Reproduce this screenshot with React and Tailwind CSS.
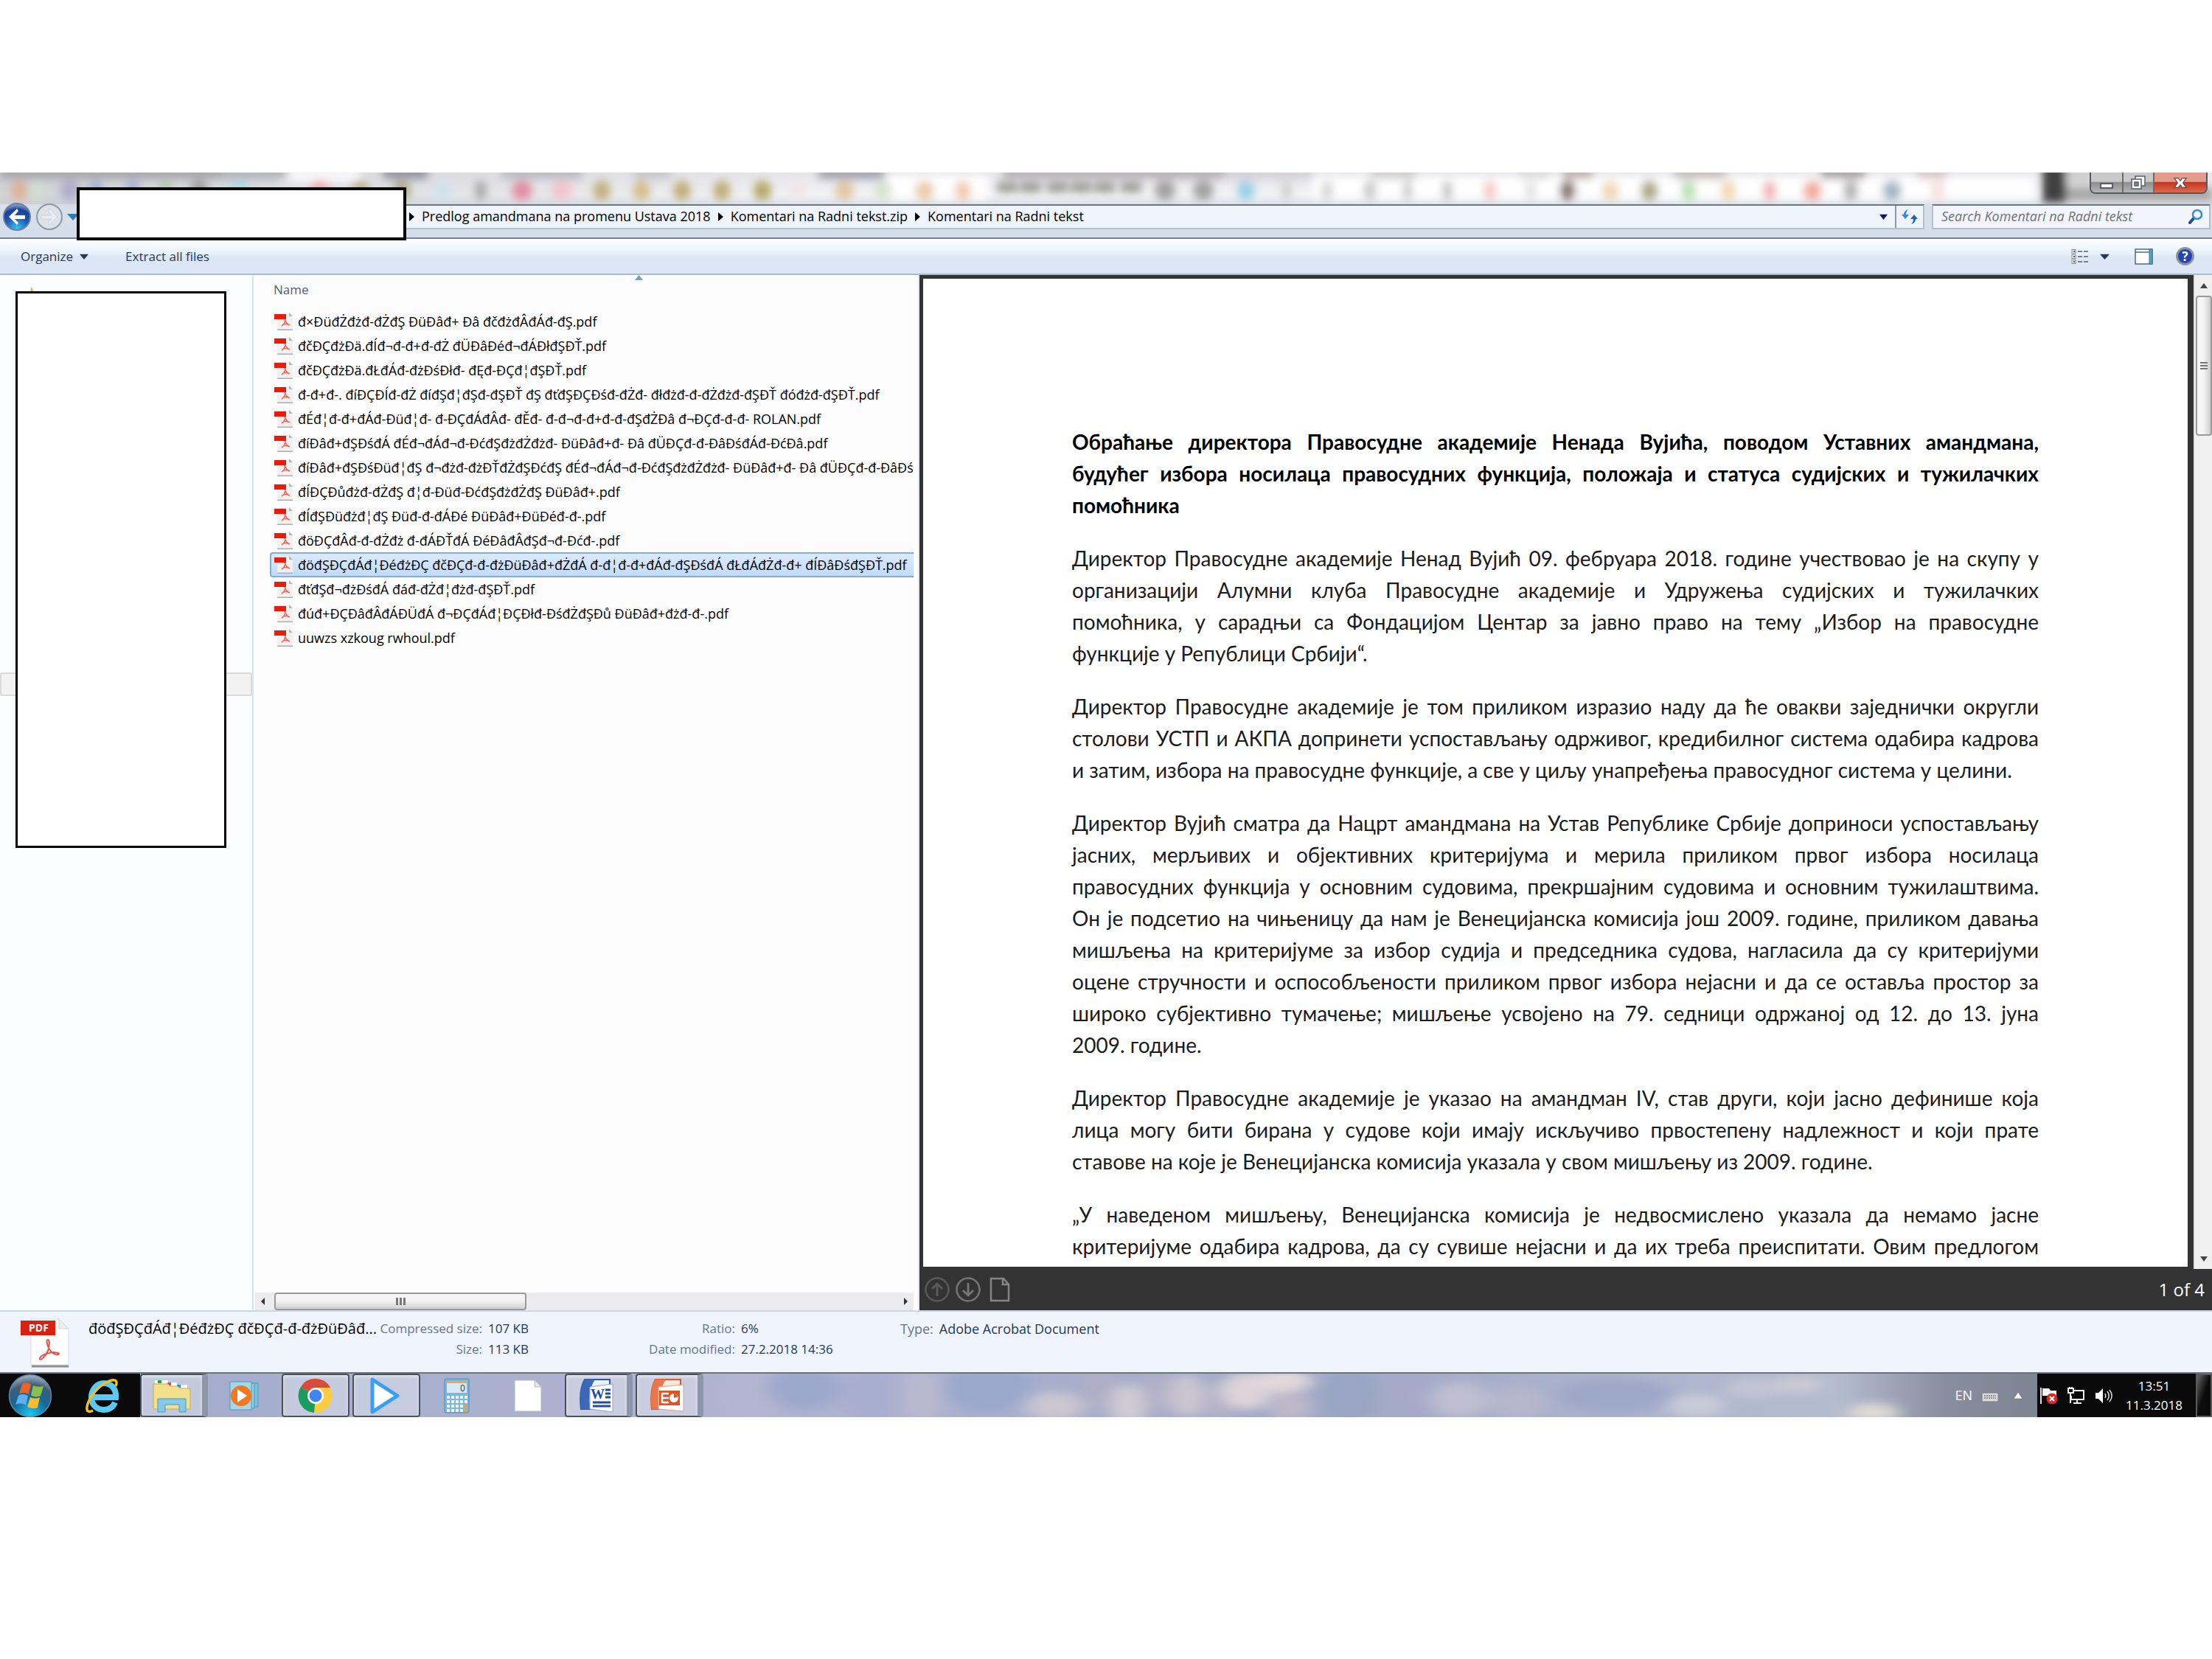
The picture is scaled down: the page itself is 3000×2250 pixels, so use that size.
import React, { useState } from 'react';

const files = [
  'đ×ĐüđŻđżđ-đŻđŞ ĐüĐâđ+ Đâ đčđżđÂđÁđ-đŞ.pdf',
  'đčĐÇđżĐä.đÍđ¬đ-đ+đ-đŻ đÜĐâĐéđ¬đÁĐłđŞĐŤ.pdf',
  'đčĐÇđżĐä.đŁđÁđ-đżĐśĐłđ- đĘđ-ĐÇđ¦đŞĐŤ.pdf',
  'đ-đ+đ-. đíĐÇĐÍđ-đŻ đíđŞđ¦đŞđ-đŞĐŤ đŞ đťđŞĐÇĐśđ-đŻđ- đłđżđ-đ-đŻđżđ-đŞĐŤ đóđżđ-đŞĐŤ.pdf',
  'đÉđ¦đ-đ+đÁđ-Đüđ¦đ- đ-ĐÇđÁđÂđ- đĚđ- đ-đ¬đ-đ+đ-đ-đŞđŻĐâ đ¬ĐÇđ-đ-đ- ROLAN.pdf',
  'đíĐâđ+đŞĐśđÁ đÉđ¬đÁđ¬đ-ĐćđŞđżđŻđżđ- ĐüĐâđ+đ- Đâ đÜĐÇđ-đ-ĐâĐśđÁđ-ĐćĐâ.pdf',
  'đíĐâđ+đŞĐśĐüđ¦đŞ đ¬đżđ-đżĐŤđŻđŞĐćđŞ đÉđ¬đÁđ¬đ-ĐćđŞđżđŻđżđ- ĐüĐâđ+đ- Đâ đÜĐÇđ-đ-ĐâĐś',
  'đÍĐÇĐůđżđ-đŻđŞ đ¦đ-Đüđ-ĐćđŞđżđŻđŞ ĐüĐâđ+.pdf',
  'đÍđŞĐüđżđ¦đŞ Đüđ-đ-đÁĐé ĐüĐâđ+ĐüĐéđ-đ-.pdf',
  'đöĐÇđÂđ-đ-đŻđż đ-đÁĐŤđÁ ĐéĐâđÂđŞđ¬đ-Đćđ-.pdf',
  'đöđŞĐÇđÁđ¦ĐéđżĐÇ đčĐÇđ-đ-đżĐüĐâđ+đŻđÁ đ-đ¦đ-đ+đÁđ-đŞĐśđÁ đŁđÁđŻđ-đ+ đÍĐâĐśđŞĐŤ.pdf',
  'đťđŞđ¬đżĐśđÁ đáđ-đŻđ¦đżđ-đŞĐŤ.pdf',
  'đúđ+ĐÇĐâđÂđÁĐÜđÁ đ¬ĐÇđÁđ¦ĐÇĐłđ-ĐśđŻđŞĐů ĐüĐâđ+đżđ-đ-.pdf',
  'uuwzs xzkoug rwhoul.pdf',
];

const heading = [
  'Обраћање директора Правосудне академије Ненада Вујића, поводом Уставних амандмана,',
  'будућег избора носилаца правосудних функција, положаја и статуса судијских и тужилачких',
  'помоћника',
];

const paragraphs = [
  [
    'Директор Правосудне академије Ненад Вујић 09. фебруара 2018. године учествовао је на скупу у',
    'организацији Алумни клуба Правосудне академије и Удружења судијских и тужилачких',
    'помоћника, у сарадњи са Фондацијом Центар за јавно право на тему „Избор на правосудне',
    'функције у Републици Србији“.',
  ],
  [
    'Директор Правосудне академије је том приликом изразио наду да ће овакви заједнички округли',
    'столови УСТП и АКПА допринети успостављању одрживог, кредибилног система одабира кадрова',
    'и затим, избора на правосудне функције, а све у циљу унапређења правосудног система у целини.',
  ],
  [
    'Директор Вујић сматра да Нацрт амандмана на Устав Републике Србије доприноси успостављању',
    'јасних, мерљивих и објективних критеријума и мерила приликом првог избора носилаца',
    'правосудних функција у основним судовима, прекршајним судовима и основним тужилаштвима.',
    'Он је подсетио на чињеницу да нам је Венецијанска комисија још 2009. године, приликом давања',
    'мишљења на критеријуме за избор судија и председника судова, нагласила да су критеријуми',
    'оцене стручности и оспособљености приликом првог избора нејасни и да се оставља простор за',
    'широко субјективно тумачење; мишљење усвојено на 79. седници одржаној од 12. до 13. јуна',
    '2009. године.',
  ],
  [
    'Директор Правосудне академије је указао на амандман IV, став други, који јасно дефинише која',
    'лица могу бити бирана у судове који имају искључиво првостепену надлежност и који прате',
    'ставове на које је Венецијанска комисија указала у свом мишљењу из 2009. године.',
  ],
];

// runs on to the next page, so its last visible line is justified too
const openParagraph = [
  '„У наведеном мишљењу, Венецијанска комисија је недвосмислено указала да немамо јасне',
  'критеријуме одабира кадрова, да су сувише нејасни и да их треба преиспитати. Овим предлогом',
];

// x, colour, half width of the icons showing through the glass frame
const glassSpots = [
  [26, '#e0aa8c', 12], [50, '#cfe0d0', 10], [95, '#a9a2c8', 14], [130, '#8fa6d0', 10], [180, '#93a3d6', 10],
  [225, '#a8c8a0', 10], [270, '#8c8c8c', 12], [325, '#9fdcea', 14], [434, '#f29a9a', 14], [488, '#b5a060', 12],
  [545, '#a89a70', 12], [600, '#c9e4f0', 12], [652, '#9a9a9a', 8], [708, '#df7b93', 14], [762, '#f5bcc6', 14],
  [816, '#b9a468', 12], [870, '#d0b474', 12], [925, '#b5a060', 12], [979, '#b5a060', 12], [1034, '#a89848', 12],
  [1082, '#f4e4e6', 12], [1145, '#dcbd92', 13], [1198, '#d0dfc8', 12], [1254, '#e6c096', 13], [1306, '#f0bd9c', 11],
  [1580, '#8e8e8e', 14], [1632, '#8e8e8e', 14], [1690, '#86c8e2', 12], [1745, '#c8c8c8', 7], [1800, '#cacaca', 8],
  [1858, '#bdbdbd', 9], [1909, '#c2c2c2', 7], [1963, '#b4b4b4', 7], [2021, '#f4bcbc', 9], [2076, '#dadada', 7],
  [2126, '#705458', 11], [2184, '#eccfa2', 12], [2237, '#9c9468', 12], [2290, '#a8d8a0', 10], [2344, '#f0cf9f', 11],
  [2400, '#ee9c9c', 9], [2458, '#f09a86', 13], [2510, '#a0a0a0', 10], [2566, '#8ea2b8', 13], [2628, '#f6d8d8', 10],
];

const smudges = [
  [0, 300, '#a8a8ac'], [300, 90, '#b4b4bc'], [520, 60, '#9494a0'], [680, 110, '#bcbcc6'], [860, 50, '#c8c8cc'],
  [1110, 90, '#a4a4b0'], [1360, 300, '#b8b2ba'], [1660, 120, '#d4d2d8'], [1860, 60, '#d0cccc'], [2060, 40, '#dcdcdc'],
  [2120, 40, '#c0b0b0'], [2270, 70, '#c8bcbc'], [2470, 60, '#a8a0a4'], [2600, 40, '#d8c8c8'],
];

const GlassBackdrop = () => (
  <svg className="absolute inset-0 w-full h-full" viewBox="0 0 3000 90" preserveAspectRatio="none" aria-hidden="true">
    <defs>
      <linearGradient id="glass" x1="0" x2="0" y1="0" y2="1">
        <stop offset="0" stopColor="#e6e5ea" />
        <stop offset=".34" stopColor="#f2f2f5" />
        <stop offset=".5" stopColor="#d8dfe8" />
        <stop offset="1" stopColor="#d3deec" />
      </linearGradient>
      <linearGradient id="glassLeft">
        <stop offset="0" stopColor="#c4c6ca" />
        <stop offset="1" stopColor="#c4c6ca" stopOpacity="0" />
      </linearGradient>
      <filter id="soft" x="-5%" y="-50%" width="110%" height="200%"><feGaussianBlur stdDeviation="6" /></filter>
    </defs>
    <rect width="3000" height="90" fill="url(#glass)" />
    <rect width="1100" height="44" fill="url(#glassLeft)" opacity=".7" />
    <g filter="url(#soft)">
      <rect x="1780" y="6" width="980" height="30" fill="#fff" />
      <rect x="1200" y="4" width="140" height="32" fill="#fff" />
      <rect x="380" y="-6" width="110" height="20" fill="#f8f8fa" />
      {smudges.map(([x, w, c]) => <rect key={x} x={x} y="-10" width={w} height="19" fill={c} />)}
      {glassSpots.map(([x, c, r]) => <ellipse key={x} cx={x} cy="25" rx={r} ry="14" fill={c} opacity=".8" />)}
      {[1352, 1384, 1420, 1452, 1484, 1520].map((x) => <rect key={x} x={x} y="14" width="28" height="13" fill="#96968e" />)}
      <rect x="2770" y="-10" width="32" height="52" fill="#3f3f3f" />
      <rect x="2802" y="20" width="200" height="20" fill="#a6a6a6" />
      <rect x="2802" y="-10" width="38" height="26" fill="#cfcfcf" />
    </g>
  </svg>
);

const Triangle = ({ className }) => (
  <svg className={className} viewBox="0 0 10 10" preserveAspectRatio="none" aria-hidden="true"><path d="M0 1h10L5 10z" fill="currentColor" /></svg>
);

const CrumbArrow = () => (
  <svg className="w-[7px] h-[12px]" viewBox="0 0 7 12" aria-hidden="true"><path d="M0 0l7 6-7 6z" fill="#000" /></svg>
);

const BackIcon = () => (
  <svg className="w-10 h-10" viewBox="0 0 40 40" aria-hidden="true">
    <defs>
      <radialGradient id="back" cx=".5" cy=".95" r=".9">
        <stop offset="0" stopColor="#3cc4f6" />
        <stop offset=".5" stopColor="#1a5cb4" />
        <stop offset=".8" stopColor="#1c3f94" />
        <stop offset="1" stopColor="#7c9cd4" />
      </radialGradient>
    </defs>
    <circle cx="20" cy="20" r="18" fill="url(#back)" stroke="#6f7f98" strokeWidth="2" />
    <path d="M9 20L20 9l2 3-5 6h14v5H17l5 5-2 3z" fill="#fff" />
  </svg>
);

const ForwardIcon = () => (
  <svg className="w-10 h-10" viewBox="0 0 40 40" aria-hidden="true">
    <circle cx="20" cy="20" r="17" fill="#dde1e8" stroke="#9097a0" strokeWidth="2" />
    <path d="M31 20L20 9l-2 3 5 6H9v5h14l-5 5 2 3z" fill="#e9ecf1" stroke="#cdd3dc" />
  </svg>
);

const PdfSmall = () => (
  <svg className="w-[26px] h-6 shrink-0" viewBox="0 0 26 24" aria-hidden="true">
    <path d="M4 1h16l5 5v17H4z" fill="#f1f1f1" />
    <path d="M20 0l5 5h-5z" fill="#b4b4b4" />
    <path d="M4 23.300h21" stroke="#adadad" strokeWidth="1.500" />
    <path d="M0 2h16v7H0z" fill="#e61c0c" />
    <path d="M14 9c2 5 4 7 7 8M15 9c0 4-2 7-5 9M12 16c3-1 6-1 9 1" fill="none" stroke="#ef6a60" strokeWidth="1.600" />
  </svg>
);

const PdfLarge = () => (
  <svg className="w-[66px] h-[68px]" viewBox="0 0 66 68" aria-hidden="true">
    <path d="M14 1h38l13 13v49H14z" fill="#fdfdfd" stroke="#dcdcdc" />
    <path d="M52 1v13h13z" fill="#ececec" stroke="#d6d6d6" />
    <path d="M15 65h50" stroke="#8e8e8e" strokeWidth="3" />
    <path d="M0 3h47v20H0z" fill="#dc2010" />
    <text x="11" y="18" fontSize="14" fontWeight="700" fill="#fff" fontFamily="Open Sans, sans-serif">PDF</text>
    <path d="M37 29c-3 0-1 8 2 13 3 5 8 8 12 7 4-2-6-4-12-2-6 1-13 4-13 8 1 3 7-3 10-9s4-17 1-17z" fill="none" stroke="#e0544c" strokeWidth="2" />
  </svg>
);

const TitleButtons = () => (
  <div className="flex h-[29px] w-[160px] rounded-b-lg border-2 border-t-0 border-[#55585e] overflow-hidden">
    <button aria-label="Minimize" className="w-[44px] flex items-center justify-center pt-2 bg-linear-to-b from-[#c9c9c9] from-45% via-[#8e8e8e] via-50% to-[#b5b5b5] border-r-2 border-[#6c6c6c]">
      <span className="w-[18px] h-[8px] bg-white border-2 border-[#5c5c66]" />
    </button>
    <button aria-label="Restore" className="w-[42px] flex items-center justify-center bg-linear-to-b from-[#c9c9c9] from-45% via-[#8e8e8e] via-50% to-[#b5b5b5] border-r-2 border-[#6c6c6c]">
      <svg className="w-5 h-5" viewBox="0 0 20 20" fill="#fff" stroke="#5c5c66" strokeWidth="1.500">
        <path d="M6 1h13v13H6z" /><path d="M1 5h13v13H1z" /><path d="M5 9h5v5H5z" fill="#888" />
      </svg>
    </button>
    <button aria-label="Close" className="flex-1 flex items-center justify-center bg-linear-to-b from-[#e39b8c] from-45% via-[#c8321c] via-50% to-[#dc6a50]">
      <svg className="w-[18px] h-4" viewBox="0 0 20 16"><path d="M1 1h6l3 4 3-4h6l-5 7 5 7h-6l-3-4-3 4H1l5-7z" fill="#fff" stroke="#6a4248" strokeWidth="1.300" /></svg>
    </button>
  </div>
);

const TitleBar = () => (
  <header className="relative h-[90px] shrink-0 border-b-2 border-[#76808e] flex flex-col">
    <GlassBackdrop />
    <div className="relative flex justify-end pr-[6px]"><TitleButtons /></div>
    <div className="relative flex items-center h-[62px] pt-[2px] pl-[3px] pr-[2px]">
      <button aria-label="Back"><BackIcon /></button>
      <button aria-label="Forward" className="ml-1"><ForwardIcon /></button>
      <button aria-label="Recent pages" className="ml-1 text-[#2c7fb4]"><Triangle className="w-4 h-[10px]" /></button>
      <nav className="ml-2 flex-1 flex items-center h-[34px] bg-[#eff4fb] border-2 border-t-[#6d7680] border-[#b4bfca] pl-[438px] text-[18px] text-black">
        <CrumbArrow />
        <a href="#predlog" className="ml-[10px] mr-[10px]">Predlog amandmana na promenu Ustava 2018</a>
        <CrumbArrow />
        <a href="#zip" className="ml-[10px] mr-[10px]">Komentari na Radni tekst.zip</a>
        <CrumbArrow />
        <a href="#tekst" className="ml-[10px]">Komentari na Radni tekst</a>
        <button aria-label="Previous locations" className="ml-auto mr-[10px] text-[#14145c]"><Triangle className="w-[11px] h-2" /></button>
        <button aria-label="Refresh" className="w-[38px] h-full border-l-2 border-[#8f98a4] flex items-center justify-center">
          <svg className="w-[22px] h-5" viewBox="0 0 22 20"><path d="M9 0C5 1 3 4 3 7H0l5 6 5-6H6c0-3 1-5 3-7z" fill="#3a8ad4" /><path d="M13 20c4-1 6-4 6-7h3l-5-6-5 6h4c0 3-1 5-3 7z" fill="#2a5fa4" /></svg>
        </button>
      </nav>
      <label className="ml-[10px] w-[378px] h-[34px] flex items-center bg-[#f2f6fc] border-2 border-t-[#6d7680] border-[#b4bfca] pl-[11px] pr-2">
        <input type="text" aria-label="Search" placeholder="Search Komentari na Radni tekst" className="flex-1 min-w-0 bg-transparent text-[18px] italic placeholder:text-[#6e7278] outline-none" />
        <svg className="w-5 h-5" viewBox="0 0 20 20" fill="none"><path d="M2 18l6-7" stroke="#1f4f94" strokeWidth="4" strokeLinecap="round" /><circle cx="12" cy="7" r="6" stroke="#3a8ad0" strokeWidth="2.500" fill="#eef6fd" /></svg>
      </label>
    </div>
  </header>
);

const Toolbar = () => (
  <div className="h-[49px] shrink-0 flex items-center pl-7 pr-6 text-[17px] text-[#1e395b] bg-linear-to-b from-[#fafdff] from-5% via-[#e6f0fb] via-45% to-[#dce7f5] to-50% border-b-2 border-[#a9bbd0]">
    <button className="flex items-center gap-[9px]">Organize <Triangle className="w-[12px] h-2" /></button>
    <button className="ml-[50px]">Extract all files</button>
    <button aria-label="Change view" className="ml-auto flex items-center gap-[15px]">
      <svg className="w-6 h-5" viewBox="0 0 24 20">
        {[0, 7, 14].map((y) => (
          <g key={y}>
            <rect x="1" y={y + 0.5} width="5" height="5" fill="#fff" stroke="#7c8896" />
            <rect x="3" y={y + 2} width="2" height="2" fill="#7a4c5c" />
            <path d={`M9 ${y + 3}h6M17 ${y + 3}h6`} stroke="#566272" strokeWidth="1.500" />
          </g>
        ))}
      </svg>
      <Triangle className="w-[13px] h-2" />
    </button>
    <button aria-label="Preview pane" className="ml-[34px]">
      <svg className="w-[25px] h-[22px]" viewBox="0 0 25 22"><path d="M1 1h23v20H1z" fill="#fff" stroke="#4c6a88" strokeWidth="1.500" /><path d="M1 5h19" stroke="#4c6a88" strokeWidth="1.500" /><path d="M20 1h4v20h-4z" fill="#58a4bc" stroke="#3b7890" /></svg>
    </button>
    <button aria-label="Help" className="ml-[31px]">
      <svg className="w-[25px] h-[25px]" viewBox="0 0 25 25"><circle cx="12.500" cy="12.500" r="11" fill="#2444b4" stroke="#8e929c" strokeWidth="3" /><text x="12.500" y="18.500" fontSize="17" fontWeight="700" textAnchor="middle" fill="#fff" fontFamily="Open Sans, sans-serif">?</text></svg>
    </button>
  </div>
);

const Sidebar = () => (
  <aside className="relative w-[344px] shrink-0 bg-[#fcfdfe] border-r-2 border-[#d8e4f0]">
    <svg className="absolute left-[39px] top-4 w-2 h-3" viewBox="0 0 8 12"><path d="M4 0l4 12H0z" fill="#f5a540" /></svg>
    <div className="absolute left-0 right-0 top-[539px] h-8 rounded-sm bg-[#f2f2f2] border-2 border-[#dadada]" />
    <div className="absolute left-[21px] top-[22px] w-[286px] h-[755px] bg-white border-[3px] border-black" />
  </aside>
);

const FileList = () => {
  const [selected, setSelected] = useState(10);

  return (
    <section className="w-[903px] shrink-0 flex flex-col bg-[#fcfcfd] border-r-2 border-[#dfe7ef] pl-[2px] pr-[6px]">
      <div className="relative h-[46px] pl-[25px] pt-2 text-[17px] leading-6 text-[#4c607a]">
        Name
        <svg className="absolute left-[515px] top-0 w-[11px] h-[7px]" viewBox="0 0 11 7"><path d="M5.500 0L11 7H0z" fill="#6fa5bd" /></svg>
      </div>
      <ul className="flex-1 min-h-0 overflow-hidden pl-[20px]">
        {files.map((name, i) => (
          <li key={name} className="h-[33px]">
            <button
              onClick={() => setSelected(i)}
              className={`w-full h-[34px] flex items-center gap-[6px] pl-1 overflow-hidden whitespace-nowrap text-[18px] text-black border-2 border-r-0 rounded-l-sm ${i === selected ? 'bg-linear-to-b from-[#dceafc] to-[#c1dbfc] border-[#84acdd]' : 'border-transparent'}`}
            >
              <PdfSmall />
              <span>{name}</span>
            </button>
          </li>
        ))}
      </ul>
      <div className="h-6 flex items-center bg-[#ececee]">
        <svg className="w-[26px] h-[10px]" viewBox="0 0 26 10"><path d="M13 0v10L8 5z" fill="#333" /></svg>
        <div className="w-[342px] h-6 flex items-center justify-center gap-[2px] rounded-sm border-2 border-[#9a9a9a] bg-linear-to-b from-[#f4f4f4] from-45% to-[#cfcfcf]">
          <span className="w-[3px] h-[10px] bg-[#777]" />
          <span className="w-[3px] h-[10px] bg-[#777]" />
          <span className="w-[3px] h-[10px] bg-[#777]" />
        </div>
        <svg className="ml-auto w-[20px] h-[10px]" viewBox="0 0 20 10"><path d="M7 0l5 5-5 5z" fill="#333" /></svg>
      </div>
    </section>
  );
};

const Lines = ({ lines, open }) => lines.map((line, i) => (
  <span key={line} className={open || i < lines.length - 1 ? 'block whitespace-nowrap [text-align-last:justify]' : 'block whitespace-nowrap'}>{line}</span>
));

const Preview = () => (
  <section className="flex-1 min-w-0 flex flex-col bg-[#333333]">
    <div className="flex-1 min-h-0 flex">
      <div className="flex-1 min-w-0 pt-[5px] pl-[5px] pr-2 pb-[3px]">
        <article className="h-full overflow-hidden bg-white px-[202px] pt-[200px] font-[Lato,'Open_Sans',sans-serif] text-[28px] leading-[43px] text-[#1c1c1c]">
          <h1 className="font-bold text-black mb-[29px]"><Lines lines={heading} /></h1>
          {paragraphs.map((lines) => (
            <p key={lines[0]} className="mb-[29px]"><Lines lines={lines} /></p>
          ))}
          <p><Lines lines={openParagraph} open /></p>
        </article>
      </div>
      <div className="w-[25px] flex flex-col items-center bg-[#f0f0f0] border-l-2 border-[#e2e2e2]">
        <svg className="h-7 w-3" viewBox="0 0 12 28"><path d="M6 11l5 7H1z" fill="#444" /></svg>
        <div className="w-[22px] h-[190px] flex flex-col items-center justify-center gap-[2px] rounded-sm border-2 border-[#9a9a9a] bg-linear-to-r from-[#f6f6f6] from-45% to-[#cfcfcf]">
          <span className="w-[10px] h-[2px] bg-[#777]" />
          <span className="w-[10px] h-[2px] bg-[#777]" />
          <span className="w-[10px] h-[2px] bg-[#777]" />
        </div>
        <svg className="mt-auto h-7 w-3" viewBox="0 0 12 28"><path d="M1 11h10l-5 7z" fill="#444" /></svg>
      </div>
    </div>
    <div className="h-14 shrink-0 flex items-center gap-2 pl-[7px] pr-[10px] text-white">
      <button aria-label="Previous page">
        <svg className="w-[34px] h-[34px]" viewBox="0 0 34 34" fill="none" stroke="#595959" strokeWidth="2.500"><circle cx="17" cy="17" r="15.500" /><path d="M17 26V9M10 16l7-7 7 7" strokeWidth="3" /></svg>
      </button>
      <button aria-label="Next page">
        <svg className="w-[34px] h-[34px]" viewBox="0 0 34 34" fill="none" stroke="#757575" strokeWidth="2.500"><circle cx="17" cy="17" r="15.500" /><path d="M17 8v17M10 18l7 7 7-7" strokeWidth="3" /></svg>
      </button>
      <button aria-label="Single page" className="ml-1">
        <svg className="w-[28px] h-[34px]" viewBox="0 0 28 34" fill="none" stroke="#858585" strokeWidth="2.500"><path d="M2 2h17l7 8v22H2z" /><path d="M18 2v8h8" /></svg>
      </button>
      <span className="ml-auto text-[24px]">1 of 4</span>
    </div>
  </section>
);

const Details = () => (
  <footer className="h-[84px] shrink-0 flex items-start pl-7 pt-[9px] bg-[#f0f4fc] border-t-2 border-[#c9d6e6] text-[17px] leading-7 text-[#1e395b]">
    <PdfLarge />
    <p className="ml-[26px] w-[390px] text-[20px] text-black whitespace-nowrap">đöđŞĐÇđÁđ¦ĐéđżĐÇ đčĐÇđ-đ-đżĐüĐâđ...</p>
    <dl className="grid grid-cols-[144px_auto] gap-x-2 whitespace-nowrap">
      <dt className="text-right text-[#64748a]">Compressed size:</dt><dd>107 KB</dd>
      <dt className="text-right text-[#64748a]">Size:</dt><dd>113 KB</dd>
    </dl>
    <dl className="w-[410px] grid grid-cols-[280px_auto] gap-x-2 whitespace-nowrap">
      <dt className="text-right text-[#64748a]">Ratio:</dt><dd>6%</dd>
      <dt className="text-right text-[#64748a]">Date modified:</dt><dd>27.2.2018 14:36</dd>
    </dl>
    <dl className="ml-[94px] flex gap-2 text-[18px] whitespace-nowrap">
      <dt className="text-[#64748a]">Type:</dt><dd>Adobe Acrobat Document</dd>
    </dl>
  </footer>
);

const StartIcon = () => (
  <svg className="w-[60px] h-[60px]" viewBox="0 0 60 60">
    <defs>
      <radialGradient id="orb" cx=".5" cy=".95" r=".95">
        <stop offset="0" stopColor="#1cc8f4" />
        <stop offset=".45" stopColor="#14699c" />
        <stop offset=".75" stopColor="#3d5c78" />
        <stop offset="1" stopColor="#a8b8c8" />
      </radialGradient>
    </defs>
    <circle cx="30" cy="30" r="28.500" fill="url(#orb)" stroke="#5c87a4" strokeWidth="1.500" />
    <path d="M19 14c3-2 7-2 12 0l-3 14c-5-3-9-2-13-1z" fill="#e8632c" />
    <path d="M34 16c5 2 9 2 14 1l-4 13c-5 2-9 2-13-1z" fill="#8cc04c" />
    <path d="M14 30c4-3 9-2 13 0l-3 13c-4-3-9-3-14-1z" fill="#5fb0ec" />
    <path d="M30 32c5 2 9 2 13 0l-3 14c-4 2-9 1-14-1z" fill="#f8bc30" />
  </svg>
);

const IeIcon = () => (
  <svg className="w-[50px] h-[50px]" viewBox="0 0 50 50" fill="none">
    <path d="M43 34c-3 7-8 10-15 10-10 0-17-7-17-17S18 8 28 8s17 8 16 19H14" stroke="#5cc8f4" strokeWidth="8" />
    <path d="M13 45c-6 3-9 1-8-5C7 28 20 11 35 5c8-3 12-1 9 7" stroke="#f0c020" strokeWidth="3.500" />
  </svg>
);

const ExplorerIcon = () => (
  <svg className="w-[54px] h-[48px]" viewBox="0 0 54 48">
    <path d="M4 3h18v5H4zM18 6h16v5H18zM30 9h18v5H30z" fill="#fff" />
    <path d="M8 3h5v4H8z" fill="#1ca838" /><path d="M21 6h5v4h-5z" fill="#e04c20" /><path d="M34 9h5v4h-5z" fill="#2c90e0" />
    <path d="M2 8h20l3 3h10l3 3h14v28H2z" fill="#f4df8c" stroke="#c8a850" />
    <path d="M8 46V28h38v18h-9V36H18v10z" fill="#86c8e8" stroke="#4c98c0" />
  </svg>
);

const MediaIcon = () => (
  <svg className="w-[44px] h-[42px]" viewBox="0 0 44 42">
    <path d="M12 4h28v32H12z" fill="#7cc0e0" stroke="#4a98bc" /><path d="M7 4h28v34H7z" fill="#90cce6" stroke="#4a98bc" /><path d="M2 2h29v38H2z" fill="#a4d6ec" stroke="#4a98bc" />
    <circle cx="17" cy="21" r="14" fill="#f07820" /><path d="M12 12l13 9-13 9z" fill="#fff" />
  </svg>
);

const ChromeIcon = () => (
  <svg className="w-[48px] h-[48px]" viewBox="0 0 48 48">
    <path d="M24 24L4 12A23 23 0 0 1 44 13z" fill="#d84a3c" />
    <path d="M24 24L4 12a23 23 0 0 0 18 35l9-18z" fill="#1c9c5c" />
    <path d="M24 24l-2 23a23 23 0 0 0 22-34H24z" fill="#fccc40" />
    <circle cx="24" cy="24" r="11" fill="#fff" /><circle cx="24" cy="24" r="8.500" fill="#4484f0" />
  </svg>
);

const PlayIcon = () => (
  <svg className="w-[48px] h-[52px]" viewBox="0 0 48 52"><path d="M5 4l34 22L5 48z" fill="#fff" stroke="#38a0f0" strokeWidth="5" strokeLinejoin="round" /></svg>
);

const CalcIcon = () => (
  <svg className="w-[36px] h-[48px]" viewBox="0 0 36 48">
    <rect x="1" y="1" width="33" height="46" rx="2" fill="#7cb8dc" stroke="#4a8cb8" />
    <rect x="4" y="4" width="27" height="16" fill="#d8e8f4" /><path d="M4 4h27v3H4z" fill="#f0a848" />
    <text x="22" y="18" fontSize="12" fill="#335" fontFamily="Open Sans, sans-serif">0</text>
    {[25, 31, 37, 43].map((y) => [4, 10, 16, 22, 28].map((x) => <rect key={`${x}-${y}`} x={x} y={y - 1} width="4" height="4" fill={x === 28 && y > 36 ? '#f0a030' : '#eef6fc'} />))}
  </svg>
);

const FileIcon = () => (
  <svg className="w-[38px] h-[44px]" viewBox="0 0 38 44"><path d="M1 1h27l9 9v33H1z" fill="#fff" stroke="#b8b8bc" /><path d="M28 1v9h9" fill="#e4e4e4" stroke="#b8b8bc" /></svg>
);

const WordIcon = () => (
  <svg className="w-[48px] h-[48px]" viewBox="0 0 48 48">
    <path d="M8 2h34v40H3C1 25 2 12 8 2z" fill="#e8f0fb" stroke="#2c58a8" strokeWidth="2" />
    <path d="M8 2h14C14 14 13 28 16 42H3C1 25 2 12 8 2z" fill="#3c68b8" />
    <path d="M15 12l31-4v38l-31-4z" fill="#fff" stroke="#8ca4d0" />
    <text x="16" y="28" fontSize="19" fontWeight="700" fill="#244c9c" fontFamily="Liberation Serif, serif">W</text>
    <path d="M36 16h7M36 21h7M36 26h7M19 33h24M19 38h24" stroke="#244c9c" strokeWidth="3" />
  </svg>
);

const PowerPointIcon = () => (
  <svg className="w-[48px] h-[48px]" viewBox="0 0 48 48">
    <path d="M8 2h34v40H3C1 25 2 12 8 2z" fill="#fbe6dc" stroke="#d4582c" strokeWidth="2" />
    <path d="M8 2h14C14 14 13 28 16 42H3C1 25 2 12 8 2z" fill="#e8784c" />
    <path d="M12 12l34-3v36l-34-3z" fill="#fff" stroke="#e0a080" />
    <path d="M13 17h28v20H13z" fill="#dc5424" />
    <path d="M17 21h9M17 27h9M17 33h9M17 20v14" stroke="#fff" strokeWidth="2.500" />
    <circle cx="33" cy="27" r="6" fill="#fff" /><path d="M33 27v-7l6 5z" fill="#dc5424" />
  </svg>
);

const TaskButton = ({ label, framed, stacked, children }) => (
  <button
    aria-label={label}
    className={`w-[92px] h-full flex items-center justify-center ${framed ? 'rounded-sm border-2 border-[#4a505c] bg-white/35 inset-shadow-sm inset-shadow-white/60' : ''} ${stacked ? 'border-r-[8px] border-r-[#8e96aa]' : ''}`}
  >
    {children}
  </button>
);

// x, y, rx, ry, colour of each cloud bank
const clouds = [
  [1020, 30, 40, 40, '#b4b6d0'], [1090, 20, 50, 30, '#9ca8cc'], [1180, 30, 40, 40, '#a8aed0'], [1250, 30, 30, 40, '#b8b8d0'],
  [1340, 20, 60, 34, '#9aa8cc'], [1430, 45, 40, 20, '#cac6d2'], [1490, 20, 24, 30, '#b0aec6'], [1530, 44, 24, 30, '#d0ccd6'],
  [1570, 26, 20, 30, '#b2b0c6'], [1610, 30, 24, 30, '#ccc6d2'], [1650, 40, 20, 26, '#b4b2c8'], [1690, 24, 34, 26, '#dcd4d8'],
  [1740, 10, 40, 16, '#e0d8da'], [1750, 46, 30, 20, '#beb8ca'], [1830, 30, 40, 40, '#9aa4c4'], [1910, 30, 30, 40, '#a4aac8'],
  [1980, 36, 40, 24, '#c0bed0'], [2060, 40, 40, 24, '#b6b6cc'], [2190, 30, 80, 24, '#9ea8c8'], [2300, 44, 40, 16, '#c8cad8'],
  [2380, 20, 40, 14, '#c2c4d4'], [2440, 15, 30, 12, '#cccad4'], [2540, 54, 36, 14, '#dcd8d4'],
];

const TaskbarSky = () => (
  <svg className="absolute inset-0 w-full h-full" viewBox="0 0 3000 60" preserveAspectRatio="none" aria-hidden="true">
    <defs>
      <filter id="cloud" x="-5%" y="-50%" width="110%" height="200%"><feGaussianBlur stdDeviation="12 6" /></filter>
      <linearGradient id="sky">
        <stop offset="0" stopColor="#9fabca" />
        <stop offset=".35" stopColor="#b0b4d0" />
        <stop offset=".6" stopColor="#a0a9c8" />
        <stop offset=".83" stopColor="#b4bccf" />
        <stop offset=".88" stopColor="#868e9f" />
        <stop offset=".92" stopColor="#7d8493" />
      </linearGradient>
    </defs>
    <rect width="3000" height="60" fill="url(#sky)" />
    <g filter="url(#cloud)">
      {clouds.map(([x, y, rx, ry, c]) => <ellipse key={x} cx={x} cy={y} rx={rx} ry={ry} fill={c} />)}
    </g>
  </svg>
);

const Taskbar = () => (
  <div className="relative h-[61px] shrink-0 overflow-hidden border-t-2 border-[#6c727c] text-white">
    <TaskbarSky />
    <div className="relative h-full flex">
      <div className="w-[190px] h-full flex items-center bg-[#0a0a0a] pl-[11px] gap-[42px]">
        <button aria-label="Start"><StartIcon /></button>
        <button aria-label="Internet Explorer"><IeIcon /></button>
      </div>
      <div className="h-full flex gap-1">
        <TaskButton label="Windows Explorer" framed stacked><ExplorerIcon /></TaskButton>
        <TaskButton label="Media Player"><MediaIcon /></TaskButton>
        <TaskButton label="Chrome" framed><ChromeIcon /></TaskButton>
        <TaskButton label="Player" framed><PlayIcon /></TaskButton>
        <TaskButton label="Calculator"><CalcIcon /></TaskButton>
        <TaskButton label="Document"><FileIcon /></TaskButton>
        <TaskButton label="Word" framed stacked><WordIcon /></TaskButton>
        <TaskButton label="PowerPoint" framed stacked><PowerPointIcon /></TaskButton>
      </div>
      <div className="ml-auto flex items-center">
        <span className="text-[18px]">EN</span>
        <svg className="ml-3 w-6 h-5" viewBox="0 0 24 20"><path d="M12 6c1-4 5-1 7-5" fill="none" stroke="#8a8a8a" strokeWidth="1.500" /><rect x="1" y="6" width="22" height="12" rx="1" fill="#d8d8d8" stroke="#787878" /><path d="M4 10h16M4 13h16" stroke="#777" strokeWidth="1.500" strokeDasharray="2 1" /></svg>
        <svg className="mx-[19px] w-[14px] h-[10px]" viewBox="0 0 14 10"><path d="M7 0l6 9H1z" fill="#fff" stroke="#666" strokeWidth=".6" /></svg>
      </div>
      <div className="h-full w-[237px] flex items-center bg-[#0a0a0a] pl-1 gap-[13px]">
        <svg className="w-6 h-6" viewBox="0 0 24 24"><path d="M1 1v22" stroke="#ddd" strokeWidth="2" /><path d="M3 2h9l2 3h8v7H3z" fill="#fff" /><circle cx="16" cy="16" r="7.500" fill="#dc2820" /><path d="M13 13l6 6m0-6l-6 6" stroke="#fff" strokeWidth="2.200" /></svg>
        <svg className="w-6 h-6" viewBox="0 0 24 24" fill="none" stroke="#eee" strokeWidth="2"><path d="M9 5h13v12H5v-5M13 17v4M8 22h11" /><path d="M1 2h7v6H1zM4 8v14M3 0v2M6 0v2" /></svg>
        <svg className="w-6 h-6" viewBox="0 0 24 24"><path d="M1 8h4l6-6v20l-6-6H1z" fill="#fff" /><path d="M14 9c1 2 1 4 0 6M17 6c3 4 3 8 0 12M20 4c4 5 4 11 0 16" fill="none" stroke="#ddd" strokeWidth="1.500" /></svg>
        <div className="flex-1 text-center text-[17px] leading-[26px] whitespace-nowrap">
          <div>13:51</div>
          <div>11.3.2018</div>
        </div>
        <button aria-label="Show desktop" className="w-[22px] h-full shrink-0 border-2 border-[#5a5a5a] bg-linear-to-br from-[#6a6a6a] to-[#0c0c0c] to-50%" />
      </div>
    </div>
  </div>
);

const App = () => (
  <div className="h-screen flex flex-col pt-[234px] pb-[328px] bg-white font-['Open_Sans','Noto_Sans',sans-serif]">
    <div className="relative flex-1 min-h-0 flex flex-col">
      <TitleBar />
      <Toolbar />
      <div className="absolute left-[104px] top-[20px] w-[447px] h-[72px] bg-white border-4 border-black" />
      <main className="flex-1 min-h-0 flex">
        <Sidebar />
        <FileList />
        <Preview />
      </main>
      <Details />
      <Taskbar />
    </div>
  </div>
);

export default App;
